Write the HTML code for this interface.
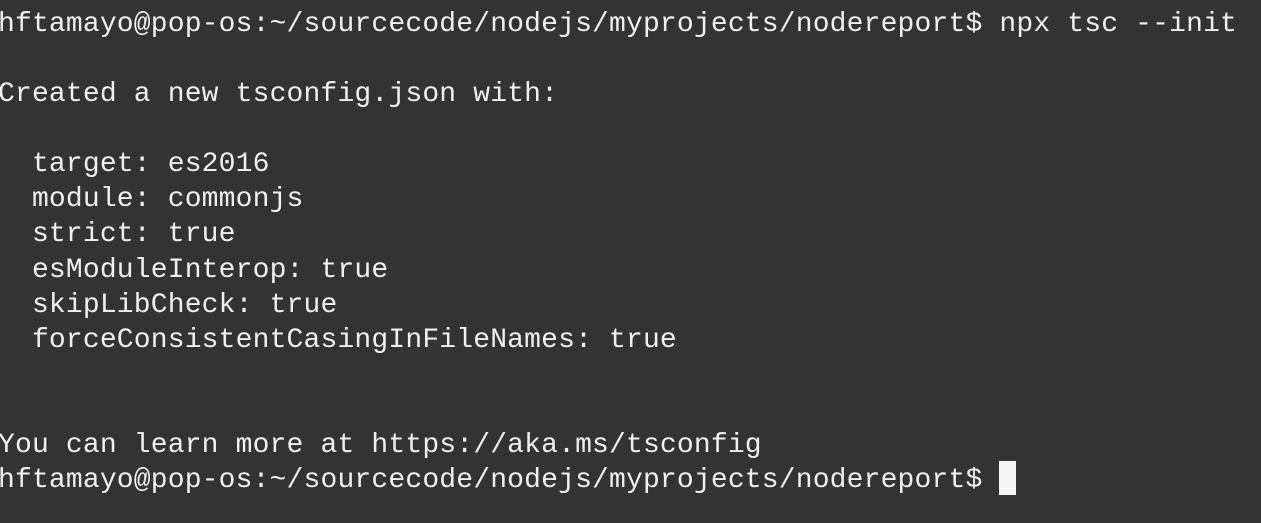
<!DOCTYPE html>
<html><head><style>
html,body{margin:0;padding:0;background:#333333;width:1261px;height:523px;overflow:hidden}
pre{margin:0;position:absolute;left:-2px;top:7px;font-family:"Liberation Mono",monospace;font-size:28px;line-height:35.08px;color:#f0f0f0;letter-spacing:0.17px}
.cur{position:absolute;left:999px;top:461px;width:17px;height:34px;background:#f4f4f4}
</style></head><body>
<pre>hftamayo@pop-os:~/sourcecode/nodejs/myprojects/nodereport$ npx tsc --init

Created a new tsconfig.json with:

  target: es2016
  module: commonjs
  strict: true
  esModuleInterop: true
  skipLibCheck: true
  forceConsistentCasingInFileNames: true


You can learn more at https://aka.ms/tsconfig
hftamayo@pop-os:~/sourcecode/nodejs/myprojects/nodereport$ </pre>
<div class="cur"></div>
</body></html>
